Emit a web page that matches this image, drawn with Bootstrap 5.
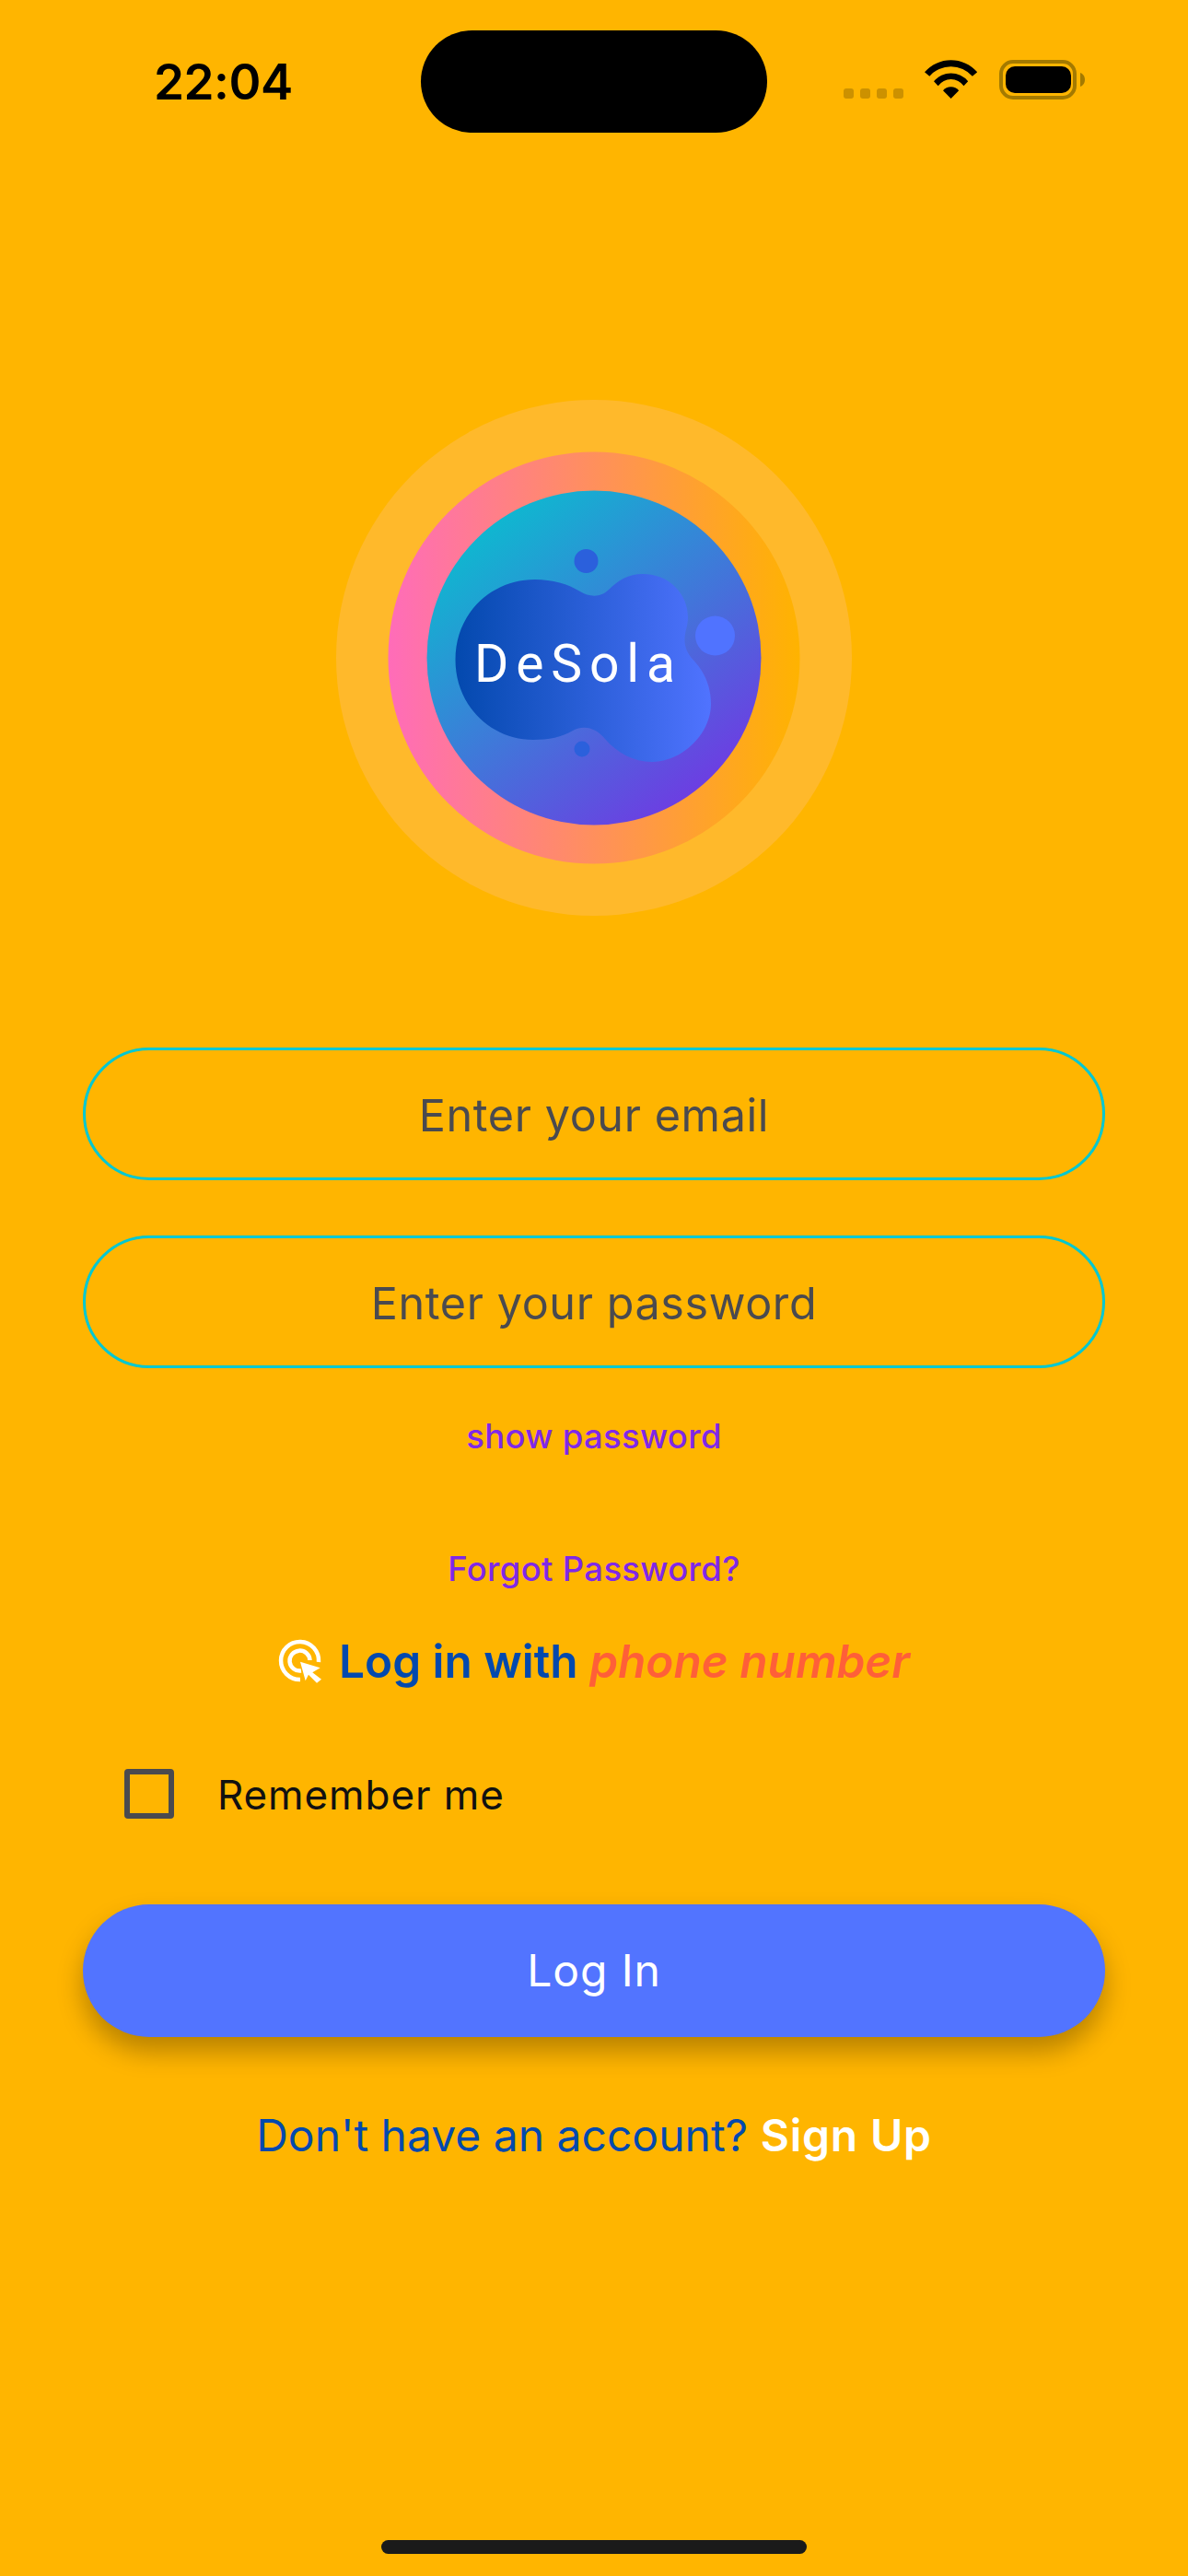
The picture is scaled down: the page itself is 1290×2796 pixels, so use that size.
<!DOCTYPE html>
<html lang="en">
	<head>
		<meta charset="UTF-8" />
		<meta name="viewport" content="width=device-width, initial-scale=1" />
		<title>DeSola Login</title>
		<link href="https://cdn.jsdelivr.net/npm/bootstrap@5.3.0/dist/css/bootstrap.min.css" rel="stylesheet" />
		<style>
			body {
				background-color: #ffb500;
				font-family: Inter, "Liberation Sans", sans-serif;
				height: 2796px;
				overflow: hidden;
			}

			.status-row {
				height: 144px;
				padding-top: 33px;
			}
			.status-time {
				width: 457px;
				padding-left: 167px;
				font-size: 53px;
				font-weight: 600;
				line-height: 54px;
				margin-top: 29px;
				letter-spacing: -0.5px;
				color: #000;
			}
			.island {
				width: 376px;
				height: 111px;
				background: #000;
				border-radius: 56px;
			}
			.status-icons {
				margin-left: 83px;
				margin-top: 32px;
				height: 43px;
			}
			.signal-dots {
				gap: 7px;
				margin-top: 31px;
				margin-right: 23px;
			}
			.signal-dots span {
				width: 11px;
				height: 11px;
				border-radius: 3px;
				background: #cc9100;
			}
			.battery {
				margin-left: 23px;
			}

			.logo-box {
				margin-top: 290px;
				height: 560px;
			}

			.login-form {
				margin-top: 143px;
				padding: 0 90px;
			}
			.pill-input {
				height: 144px;
				background: transparent;
				border: 3px solid #00c8d2;
				padding-top: 8px;
				text-align: center;
				font-size: 48.500px;
				letter-spacing: 0.6px;
				color: #4a4a4f;
				box-shadow: none;
			}
			.pill-input::placeholder {
				color: #4a4a4f;
				opacity: 1;
			}
			.pill-input + .pill-input {
				margin-top: 60px;
			}
			.purple-link {
				color: #7f28e8;
				font-size: 36.500px;
				font-weight: 500;
				line-height: 50px;
				letter-spacing: 0.3px;
				text-decoration: none;
			}
			.show-link {
				margin-top: 49px;
			}
			.forgot-link {
				margin-top: 94px;
			}
			.phone-line {
				margin-top: 45px;
				height: 60px;
				gap: 18px;
				font-size: 49.500px;
				font-weight: 600;
				color: #0349ae;
			}
			.phone-line em {
				color: #ff5f38;
			}
			.remember-row {
				margin-top: 87px;
				padding-left: 45px;
				height: 54px;
			}
			.remember-box {
				width: 54px;
				height: 54px;
				margin: 0;
				background: transparent;
				border: 6px solid #4a4a4f;
				border-radius: 6px;
				flex-shrink: 0;
			}
			.remember-label {
				margin-left: 47px;
				margin-top: 2px;
				font-size: 44px;
				letter-spacing: 0.9px;
				color: #111;
			}
			.login-btn {
				margin-top: 93px;
				height: 144px;
				background: #5274ff;
				border: 0;
				color: #fff;
				font-size: 48px;
				letter-spacing: 0.9px;
				box-shadow: 0 16px 28px rgba(0, 0, 0, 0.28);
			}
			.signup-line {
				margin-top: 77px;
				font-size: 48px;
				line-height: 60px;
				color: #0349ae;
			}
			.signup-line a {
				color: #fff;
				font-weight: 600;
				letter-spacing: 0.8px;
				text-decoration: none;
			}
			.home-bar {
				width: 462px;
				height: 15px;
				margin: 409px auto 0;
				background: #1a1a1a;
				border-radius: 8px;
			}
			.logo-word {
				font-family: Roboto, "Noto Sans", sans-serif;
				font-size: 57px;
				fill: #fff;
			}
		</style>
	</head>
	<body>
		<!-- barra de status -->
		<div class="status-row d-flex align-items-start">
			<div class="status-time">22:04</div>
			<div class="island"></div>
			<div class="status-icons d-flex align-items-start">
				<div class="signal-dots d-flex"><span></span><span></span><span></span><span></span></div>
				<svg width="58" height="43" viewBox="0 0 58 43">
					<path d="M0 13.3A38 38 0 0 1 57.2 13.3L51.9 17.7A31 31 0 0 0 5.3 17.7Z" />
					<path d="M10 23.3A24 24 0 0 1 47.2 23.3L42.5 28.3A17 17 0 0 0 14.7 28.3Z" />
					<path d="M20 33.3A11 11 0 0 1 37.2 33.3L28.6 42Z" />
				</svg>
				<svg class="battery" width="94" height="43" viewBox="0 0 94 43">
					<rect x="2" y="2" width="80" height="39" rx="13" fill="none" stroke="#a47a00" stroke-width="4" />
					<rect x="7" y="7" width="71" height="29" rx="10" />
					<path d="M88 14C91 15 93 18 93 21.500C93 25 91 28 88 29Z" fill="#a47a00" />
				</svg>
			</div>
		</div>

		<!-- logo -->
		<div class="logo-box d-flex justify-content-center">
			<svg width="560" height="560" viewBox="365 434 560 560">
				<defs>
					<linearGradient id="ringGrad" x1="0" y1="0" x2="1" y2="0">
						<stop offset="0" stop-color="#ff6cb9" />
						<stop offset="1" stop-color="#ffb300" />
					</linearGradient>
					<linearGradient id="ballGrad" x1="0.2" y1="0.1" x2="0.82" y2="0.9">
						<stop offset="0" stop-color="#10b6d0" />
						<stop offset="1" stop-color="#6d3de2" />
					</linearGradient>
					<linearGradient id="blobGrad" x1="0" y1="0" x2="1" y2="0">
						<stop offset="0" stop-color="#0349ae" />
						<stop offset="1" stop-color="#5073ff" />
					</linearGradient>
				</defs>
				<circle cx="645" cy="714" r="280" fill="#ffb92b" />
				<circle cx="645" cy="714" r="223.500" fill="url(#ringGrad)" />
				<circle cx="645" cy="714" r="181.500" fill="url(#ballGrad)" />
				<path
					fill="url(#blobGrad)"
					d="M494.500 716C494.500 666 533 629 581 629C600 629 617 634 630 642C640 648 652 649 661 640C671 630 682 623 698 623C727 623 747 645 747 670C747 680 743.500 685 743.500 695C743.500 703 747 710 752.500 716C765 729 772 745 772 764C772 797 740 827 708 827C688 827 670 817 657 802C648 791 635 786 622 793C610 800 596 803 579 803C533 803 494.500 766 494.500 716Z"
				/>
				<circle cx="636.500" cy="609" r="13" fill="#2b60dc" />
				<circle cx="776.500" cy="690" r="21.500" fill="#5073ff" />
				<circle cx="632" cy="813" r="8.500" fill="#2b60dc" />
				<text class="logo-word" x="515" y="740" textLength="218" lengthAdjust="spacing">DeSola</text>
			</svg>
		</div>

		<!-- formulario -->
		<form class="login-form d-flex flex-column">
			<input class="form-control rounded-pill pill-input" type="email" placeholder="Enter your email" />
			<input class="form-control rounded-pill pill-input" type="text" placeholder="Enter your password" />
			<a class="purple-link show-link text-center" href="#">show password</a>
			<a class="purple-link forgot-link text-center" href="#">Forgot Password?</a>
			<div class="phone-line d-flex justify-content-center align-items-center">
				<svg width="48" height="48" viewBox="0 0 48 48">
					<g fill="none" stroke="#fff" stroke-width="4.500">
						<path d="M44 25A20.500 20.500 0 1 0 24 44" />
						<path d="M34.500 23A11 11 0 1 0 25 34.500" />
					</g>
					<path fill="#fff" d="M24 24.700L45.700 31.300L37.300 36.300L47 43.700L42 47.700L33 38.700L29.700 45.300Z" />
				</svg>
				<span>Log in with <em>phone number</em></span>
			</div>
			<div class="remember-row d-flex align-items-center">
				<input class="form-check-input remember-box" type="checkbox" id="lembrar" />
				<label class="remember-label" for="lembrar">Remember me</label>
			</div>
			<button type="button" class="btn rounded-pill login-btn">Log In</button>
			<div class="signup-line text-center">Don't have an account? <a href="#">Sign Up</a></div>
		</form>

		<div class="home-bar"></div>

		<script src="https://cdn.jsdelivr.net/npm/bootstrap@5.3.0/dist/js/bootstrap.bundle.min.js"></script>
	</body>
</html>
